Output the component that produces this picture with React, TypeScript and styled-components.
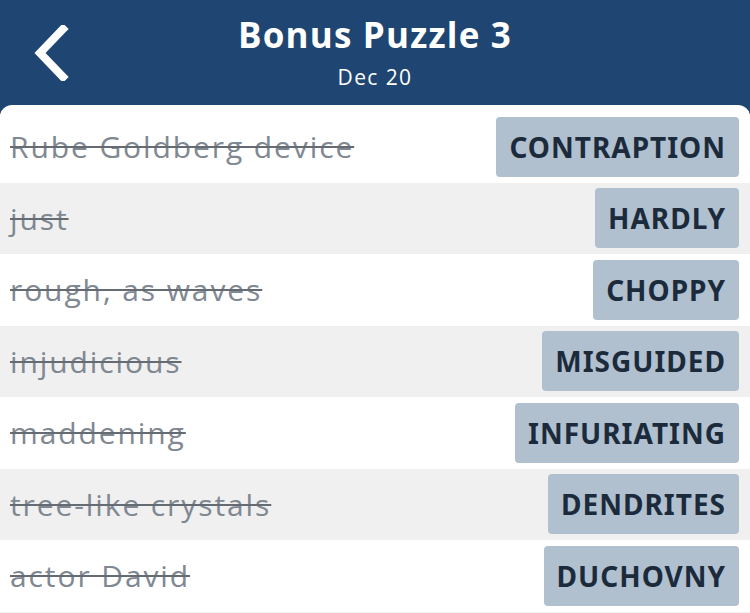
import React from 'react';
import styled, { createGlobalStyle } from 'styled-components';

const GlobalStyle = createGlobalStyle`
  html, body {
    margin: 0;
    padding: 0;
    background: #1f4672;
    overflow: hidden;
  }
  * { box-sizing: border-box; }
`;

const Screen = styled.div`
  width: 750px;
  height: 613px;
  background: #1f4672;
  display: flex;
  flex-direction: column;
  font-family: 'Open Sans', Lato, sans-serif;
`;

const Header = styled.header`
  height: 105px;
  flex-shrink: 0;
  display: grid;
  grid-template-columns: 110px 1fr 110px;
  align-items: center;
`;

const BackButton = styled.button`
  justify-self: start;
  margin-left: 31px;
  background: none;
  border: 0;
  padding: 0;
  display: flex;
`;

const TitleBlock = styled.div`
  display: flex;
  flex-direction: column;
  align-items: center;
  color: #fff;
  padding-bottom: 2px;
`;

const Title = styled.h1`
  margin: 0;
  font-size: 35px;
  font-weight: 700;
  letter-spacing: 1.2px;
  line-height: 44px;
`;

const Subtitle = styled.div`
  font-size: 21px;
  letter-spacing: 1.4px;
  line-height: 28px;
  margin-top: 6px;
`;

const Panel = styled.div`
  flex: 1;
  background: #fff;
  border-radius: 12px 12px 0 0;
  padding-top: 6px;
  overflow: hidden;
`;

const Row = styled.div<{ $shaded: boolean }>`
  height: 71.5px;
  display: flex;
  align-items: center;
  justify-content: space-between;
  padding: 0 11px 0 10px;
  background: ${(p) => (p.$shaded ? '#f0f0f0' : '#fff')};
`;

const Clue = styled.span`
  font-size: 30px;
  letter-spacing: 1.9px;
  color: #808892;
  text-decoration: line-through;
  text-decoration-color: #646b73;
  text-decoration-thickness: 2px;
`;

const Answer = styled.span`
  height: 60px;
  display: flex;
  align-items: center;
  padding: 0 13px 0 13px;
  background: #b0c0cf;
  border-radius: 4px;
  color: #1c2b3c;
  font-family: 'Noto Sans', 'Open Sans', sans-serif;
  font-weight: 700;
  font-size: 28px;
  letter-spacing: 1px;
`;

const clues: [string, string][] = [
  ['Rube Goldberg device', 'CONTRAPTION'],
  ['just', 'HARDLY'],
  ['rough, as waves', 'CHOPPY'],
  ['injudicious', 'MISGUIDED'],
  ['maddening', 'INFURIATING'],
  ['tree-like crystals', 'DENDRITES'],
  ['actor David', 'DUCHOVNY'],
  ['', ''],
];

export default function App() {
  return (
    <Screen>
      <GlobalStyle />
      <Header>
        <BackButton aria-label="Back">
          <svg width="44" height="56" viewBox="0 0 44 56">
            <path d="M32 4 L9 28 L32 52" fill="none" stroke="#fff" strokeWidth="8" strokeLinecap="square" />
          </svg>
        </BackButton>
        <TitleBlock>
          <Title>Bonus Puzzle 3</Title>
          <Subtitle>Dec 20</Subtitle>
        </TitleBlock>
        <div />
      </Header>
      <Panel>
        {clues.map(([clue, answer], i) => (
          <Row key={i} $shaded={i % 2 === 1}>
            <Clue>{clue}</Clue>
            {answer && <Answer>{answer}</Answer>}
          </Row>
        ))}
      </Panel>
    </Screen>
  );
}
